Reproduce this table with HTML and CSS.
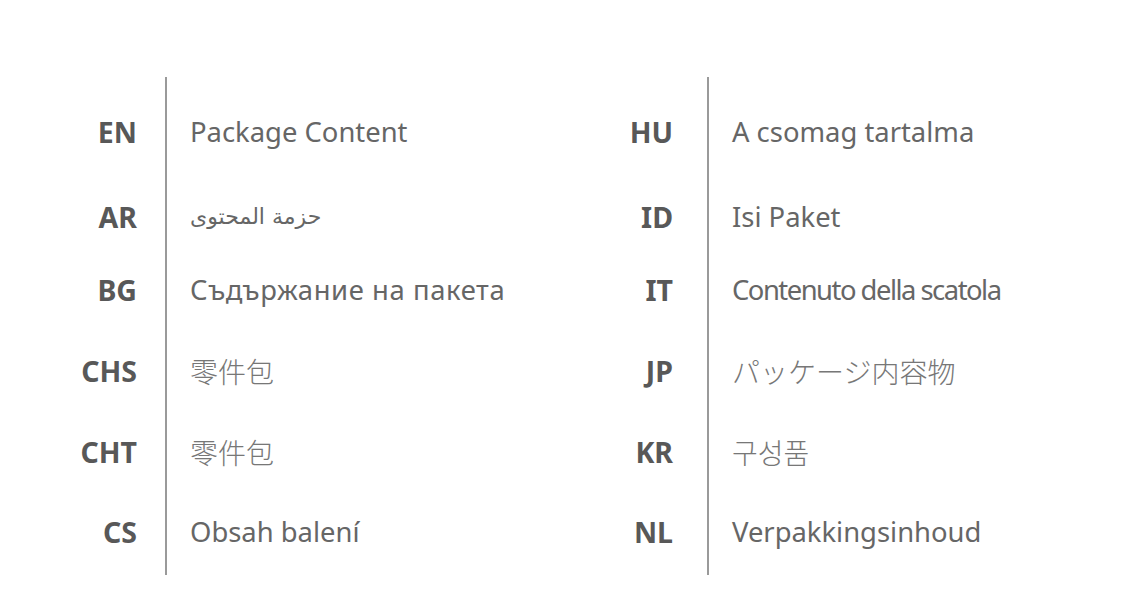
FILE: index.html
```html
<!DOCTYPE html>
<html lang="en">
<head>
<meta charset="utf-8">
<title>Package Content</title>
<link rel="stylesheet" href="styles.css">
</head>
<body>
<main class="sheet">
  <section class="col col-left">
    <div class="labels">
      <div class="lab">EN</div>
      <div class="lab">AR</div>
      <div class="lab">BG</div>
      <div class="lab">CHS</div>
      <div class="lab">CHT</div>
      <div class="lab">CS</div>
    </div>
    <div class="values">
      <div class="val">Package Content</div>
      <div class="val ar" lang="ar">حزمة المحتوى</div>
      <div class="val bg" lang="bg">Съдържание на пакета</div>
      <div class="val cjk" lang="zh-CN">零件包</div>
      <div class="val cjk" lang="zh-TW">零件包</div>
      <div class="val" lang="cs">Obsah balení</div>
    </div>
  </section>
  <section class="col col-right">
    <div class="labels">
      <div class="lab">HU</div>
      <div class="lab">ID</div>
      <div class="lab">IT</div>
      <div class="lab">JP</div>
      <div class="lab">KR</div>
      <div class="lab">NL</div>
    </div>
    <div class="values">
      <div class="val" lang="hu">A csomag tartalma</div>
      <div class="val" lang="id">Isi Paket</div>
      <div class="val it" lang="it">Contenuto della scatola</div>
      <div class="val cjk" lang="ja">パッケージ内容物</div>
      <div class="val cjk" lang="ko">구성품</div>
      <div class="val" lang="nl">Verpakkingsinhoud</div>
    </div>
  </section>
</main>
</body>
</html>
```

FILE: styles.css
```css
html, body {
  margin: 0;
  padding: 0;
  background: #ffffff;
}

body {
  font-family: "Noto Sans", "Open Sans", "Noto Sans CJK SC", sans-serif;
  color: #666666;
}

.sheet {
  display: flex;
  padding-top: 77px;
  padding-left: 37px;
}

.col {
  display: flex;
}

.labels,
.values {
  display: grid;
  grid-template-rows: 85px 73px 81px 81px 80px 40px;
  padding: 35px 0 23px;
}

.labels {
  width: 100px;
  padding-right: 28px;
  justify-items: end;
}

.col-right .labels {
  padding-right: 34px;
}

.values {
  border-left: 2px solid #9a9a9a;
  padding-left: 23px;
  width: 385px;
}

.col-left .values {
  width: 383px;
}

.lab {
  font-weight: 700;
  font-size: 28.5px;
  line-height: 40px;
  color: #585858;
}

.val {
  font-size: 27.4px;
  line-height: 40px;
  color: #666666;
  white-space: nowrap;
}

.val.bg {
  letter-spacing: 0.6px;
}

.val.ar {
  font-family: "DejaVu Sans", "Noto Sans", sans-serif;
  font-size: 22px;
  letter-spacing: -0.3px;
}

.val.cjk {
  font-family: "Noto Sans CJK SC", "Noto Sans CJK JP", "Noto Sans CJK KR", sans-serif;
  font-weight: 300;
  font-size: 28px;
  color: #777777;
}

.val[lang="ja"] {
  font-family: "Noto Sans CJK JP", sans-serif;
}

.val[lang="ko"] {
  font-family: "Noto Sans CJK KR", sans-serif;
}

.val[lang="zh-TW"] {
  font-family: "Noto Sans CJK TC", sans-serif;
}

.val.it {
  letter-spacing: -1.5px;
}
```
